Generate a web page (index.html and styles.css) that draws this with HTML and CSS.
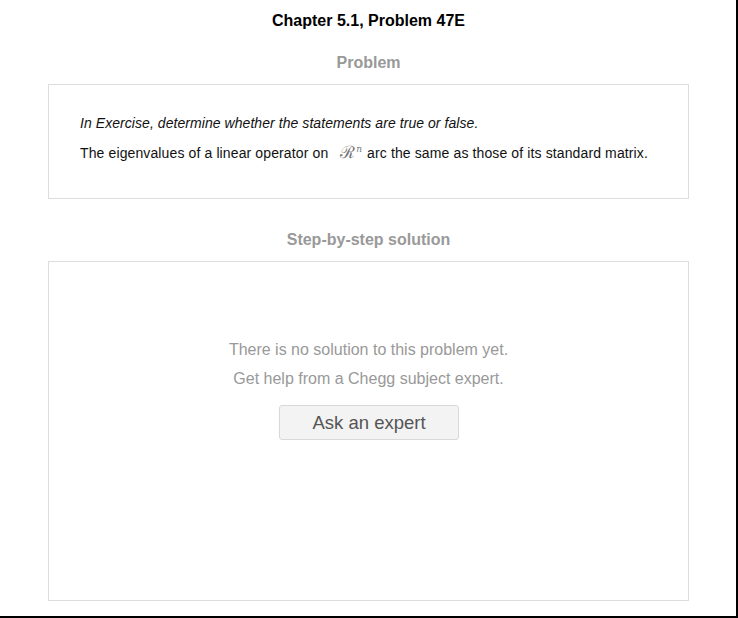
FILE: index.html
```html
<!DOCTYPE html>
<html>
<head>
<meta charset="utf-8">
<link rel="stylesheet" href="styles.css">
</head>
<body>
<div class="frame">
  <h1 class="title">Chapter 5.1, Problem 47E</h1>
  <h2 class="section-head">Problem</h2>
  <div class="card problem">
    <p class="intro">In Exercise, determine whether the statements are true or false.</p>
    <p class="statement">The eigenvalues of a linear operator on <span class="math"><span class="math-r">ℛ</span><span class="math-n">n</span></span> arc the same as those of its standard matrix.</p>
  </div>
  <h2 class="section-head step">Step-by-step solution</h2>
  <div class="card solution">
    <p class="empty">There is no solution to this problem yet.</p>
    <p class="empty">Get help from a Chegg subject expert.</p>
    <button class="ask">Ask an expert</button>
  </div>
</div>
</body>
</html>
```
FILE: styles.css
```css
* { box-sizing: border-box; }
html, body { margin: 0; padding: 0; background: #fff; }
body { font-family: "Liberation Sans", Arial, sans-serif; }
.frame {
  width: 738px;
  height: 618px;
  border-right: 2px solid #000;
  border-bottom: 2px solid #000;
  padding: 12px 47px 0 48px;
  display: flex;
  flex-direction: column;
  align-items: stretch;
}
.title {
  margin: 0;
  font-size: 16px;
  font-weight: bold;
  color: #000;
  text-align: center;
  line-height: 18px;
}
.section-head {
  margin: 24px 0 0;
  font-size: 16px;
  font-weight: bold;
  color: #999;
  text-align: center;
  line-height: 18px;
}
.section-head.step { margin-top: 32px; }
.card {
  border: 1px solid #ddd;
  background: #fff;
  margin-top: 12px;
}
.problem {
  height: 115px;
  padding: 30px 31px 0 31px;
}
.problem p {
  margin: 0;
  font-size: 14px;
  color: #111;
  line-height: 16px;
}
.problem .intro { font-style: italic; letter-spacing: 0.06px; }
.problem .statement { margin-top: 10px; letter-spacing: 0.12px; }
.math {
  display: inline-block;
  margin-left: 8px;
  margin-right: 1px;
  color: #777;
  font-family: "DejaVu Serif", serif;
  letter-spacing: 0;
}
.math-r { font-size: 17px; }
.math-n { font-size: 9px; font-style: italic; vertical-align: 6px; margin-left: 1px; }
.solution {
  height: 340px;
  display: flex;
  flex-direction: column;
  align-items: center;
  padding-top: 79px;
}
.empty {
  margin: 0 0 11px;
  font-size: 16px;
  line-height: 18px;
  color: #999;
}
.ask {
  margin-top: 6px;
  width: 180px;
  height: 35px;
  background: #f3f3f3;
  border: 1px solid #d8d8d8;
  border-radius: 3px;
  font-family: "Liberation Sans", Arial, sans-serif;
  font-size: 18.5px;
  color: #555;
  padding: 0 0 0 1px;
}
```
